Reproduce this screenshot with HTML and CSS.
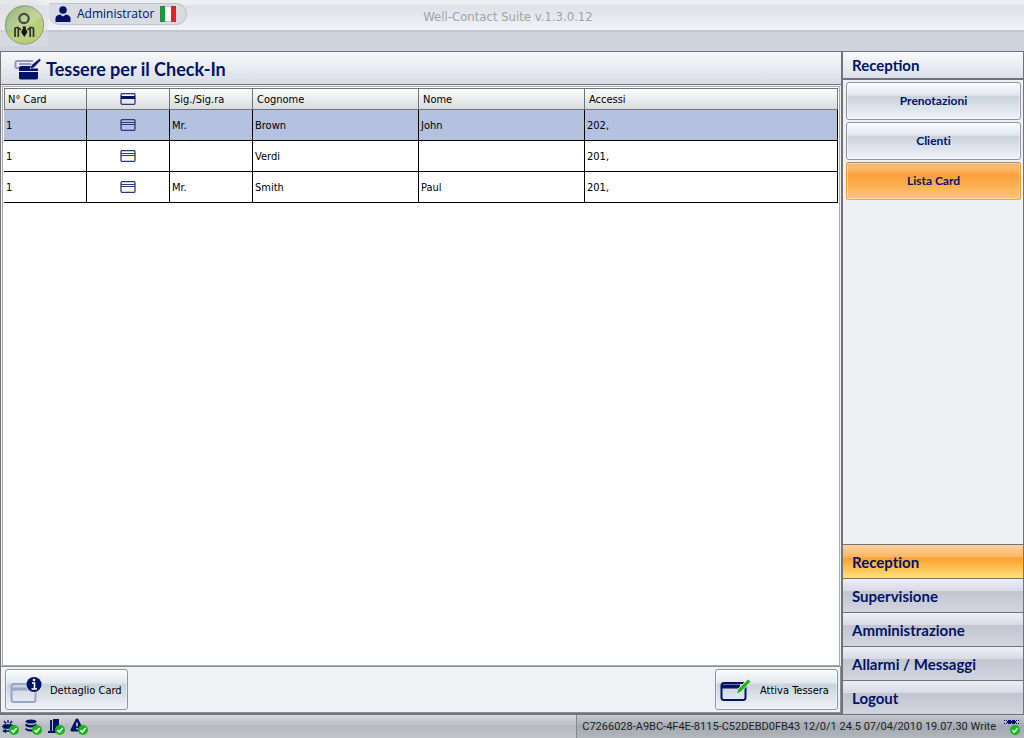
FILE: index.html
```html
<!DOCTYPE html>
<html lang="it">
<head>
<meta charset="utf-8">
<title>Well-Contact Suite</title>
<link rel="stylesheet" href="styles.css">
</head>
<body>
<svg class="defs" aria-hidden="true">
  <symbol id="card" viewBox="0 0 16 12">
    <rect x="1" y="0.5" width="14" height="11" rx="1.5" fill="none" stroke="#2b3a80" stroke-width="1.3"/>
    <path d="M1 3.5h14M1 5.5h14" stroke="#2b3a80"/>
  </symbol>
  <symbol id="check" viewBox="0 0 10 10">
    <circle cx="5" cy="5" r="5" fill="#12b818"/>
    <path d="M2.4 5.2l1.9 1.9 3.4-4" fill="none" stroke="#fff" stroke-width="1.6"/>
  </symbol>
</svg>
<div class="app">
  <header class="topbar">
    <svg class="logo" viewBox="0 0 48 46" role="img" aria-label="Well-Contact">
      <defs><linearGradient id="lg" x1="0" y1="0" x2="1" y2="1"><stop offset="0" stop-color="#7fa670"/><stop offset=".5" stop-color="#b8ce82"/><stop offset="1" stop-color="#bccf6c"/></linearGradient></defs>
      <path d="M0 0H36Q46 5 49 20V46H0Z" fill="#dfe0e1" opacity=".5"/>
      <circle cx="24.5" cy="25" r="19.2" fill="url(#lg)" stroke="#8d9c7c"/>
      <path d="M6 29Q27 30 42 17Q36 6 24 6.5Q6 9 6 29Z" fill="#fff" opacity=".14"/>
      <circle cx="24" cy="18.5" r="4.7" fill="none" stroke="#45494a" stroke-width="2.2"/>
      <path d="M15 37V29Q15 27.5 16.5 27.5H18.3V37M33.5 37V29Q33.5 27.5 32 27.5H30.2V37M18.300 27.5L21 30M30.200 27.5L27.500 30" fill="none" stroke="#2c3031" stroke-width="1.7"/>
      <path d="M22.5 26.5h3.5l-.5 2 2 3.5-3.2 5-3.2-5 2-3.5z" fill="#101415"/>
    </svg>
    <div class="user">
      <svg width="16" height="16" viewBox="0 0 16 16" aria-hidden="true"><circle cx="8" cy="4" r="3.8" fill="#001366"/><path d="M0.5 16V12Q1 9 5 8.5L8 10.5 11 8.5Q15 9 15.5 12V16Z" fill="#001366"/></svg>
      <span class="user-name">Administrator</span>
      <svg width="16" height="16" viewBox="0 0 16 16" role="img" aria-label="Italiano"><rect width="16" height="16" fill="#fff"/><rect width="5" height="16" fill="#1d9a3a"/><rect x="11" width="5" height="16" fill="#ee1c24"/><rect x=".5" y=".5" width="15" height="15" fill="none" stroke="#555" opacity=".35"/></svg>
    </div>
    <div class="app-title">Well-Contact Suite v.1.3.0.12</div>
  </header>

  <main class="panel">
    <h1 class="panel-title">
      <svg width="28" height="22" viewBox="0 0 28 22" aria-hidden="true">
        <path d="M1.5 10V5Q1.5 3 3.5 3H19" fill="none" stroke="#8e99c3" stroke-width="2"/><path d="M5 6H17M1.5 10H5" stroke="#8e99c3" stroke-width="2"/>
        <path d="M7 8H18L19 10.5H24V13H5V10Q5 8 7 8ZM5 14H24V20Q24 21.5 22 21.5H7Q5 21.5 5 20Z" fill="#001366"/>
        <path d="M16 11L17.5 7 25.5 0.5 27 2.2 20 9.5Z" fill="#001366" stroke="#e8eaf0" stroke-width=".5"/>
      </svg>
      Tessere per il Check-In
    </h1>
    <div class="grid-wrap">
      <table class="grid">
        <colgroup><col class="c-sm"><col class="c-sm"><col class="c-sm"><col class="c-lg"><col class="c-lg"><col></colgroup>
        <thead><tr>
          <th scope="col">N° Card</th>
          <th scope="col" class="mid"><svg width="16" height="12" viewBox="0 0 16 12" role="img" aria-label="Card"><rect x="1" y=".5" width="14" height="11" rx="1.5" fill="none" stroke="#2b3a80" stroke-width="1.3"/><rect x="1" y="3" width="14" height="3" fill="#001366"/></svg></th>
          <th scope="col">Sig./Sig.ra</th><th scope="col">Cognome</th><th scope="col">Nome</th><th scope="col">Accessi</th>
        </tr></thead>
        <tbody>
          <tr class="selected"><td>1</td><td class="mid"><svg width="16" height="12"><use href="#card"/></svg></td><td>Mr.</td><td>Brown</td><td>John</td><td>202,</td></tr>
          <tr><td>1</td><td class="mid"><svg width="16" height="12"><use href="#card"/></svg></td><td></td><td>Verdi</td><td></td><td>201,</td></tr>
          <tr><td>1</td><td class="mid"><svg width="16" height="12"><use href="#card"/></svg></td><td>Mr.</td><td>Smith</td><td>Paul</td><td>201,</td></tr>
        </tbody>
      </table>
    </div>
    <div class="actions">
      <button class="btn action" type="button">
        <svg width="32" height="28" viewBox="0 0 32 28" aria-hidden="true"><rect x="1.5" y="8" width="24" height="18" rx="2.5" fill="none" stroke="#9aa4c8" stroke-width="2"/><path d="M2 13H25" stroke="#9aa4c8" stroke-width="3"/><circle cx="24" cy="8.5" r="8.3" fill="#e4e9ef"/><circle cx="24" cy="8.5" r="7.6" fill="#001366"/><path d="M22 7H24.5V13M21.5 13H27" stroke="#fff" stroke-width="1.6" fill="none"/><circle cx="24" cy="4" r="1.3" fill="#fff"/></svg>
        <span>Dettaglio Card</span>
      </button>
      <button class="btn action" type="button">
        <svg width="32" height="28" viewBox="0 0 32 28" aria-hidden="true"><rect x="1.5" y="7" width="24" height="17" rx="2.5" fill="none" stroke="#001366" stroke-width="2"/><path d="M2 10.5H20" stroke="#001366" stroke-width="4"/><path d="M16 18.5L18 13 28 3 31 5.5 21 16Z" fill="#1fb81c" stroke="#e4e9ef"/></svg>
        <span>Attiva Tessera</span>
      </button>
    </div>
  </main>

  <aside class="side">
    <h2 class="side-title">Reception</h2>
    <div class="side-body">
      <button class="btn side-btn" type="button">Prenotazioni</button>
      <button class="btn side-btn" type="button">Clienti</button>
      <button class="btn side-btn current" type="button">Lista Card</button>
    </div>
    <nav class="nav">
      <button class="nav-item current" type="button">Reception</button>
      <button class="nav-item" type="button">Supervisione</button>
      <button class="nav-item" type="button">Amministrazione</button>
      <button class="nav-item" type="button">Allarmi / Messaggi</button>
      <button class="nav-item" type="button">Logout</button>
    </nav>
  </aside>

  <footer class="status">
    <div class="status-icons">
      <svg width="18" height="18" viewBox="0 0 18 18"><path d="M3 7h8v3H3zM1 8.5h3M7 2v3M3 3l2 2.5M11 3L9 5.5M2 13h8M5 11.5L2.5 13 5 14.5" stroke="#001366" stroke-width="1.3" fill="#001366"/><use href="#check" x="8" y="7" width="10" height="10"/></svg>
      <svg width="18" height="18" viewBox="0 0 18 18"><ellipse cx="7" cy="3.5" rx="5.5" ry="2" fill="#001366"/><path d="M1.500 5.500Q7 8.500 12.500 5.500V8Q7 11 1.500 8ZM1.500 10Q7 13 12.500 10V12Q7 15 1.500 12Z" fill="#001366"/><use href="#check" x="8" y="7" width="10" height="10"/></svg>
      <svg width="18" height="18" viewBox="0 0 18 18"><path d="M3 2h2v11H3zM6 1h6v12H6zM1 13h12v2H1z" fill="#001366"/><use href="#check" x="8" y="7" width="10" height="10"/></svg>
      <svg width="18" height="18" viewBox="0 0 18 18"><path d="M7 2L12 12H2Z" fill="#001366" stroke="#001366" stroke-linejoin="round" stroke-width="3"/><path d="M7 4.500v4M7 10v1.500" stroke="#d8d9dd" stroke-width="1.5"/><use href="#check" x="8" y="7" width="10" height="10"/></svg>
    </div>
    <div class="status-text">
      <span>C7266028-A9BC-4F4E-8115-C52DEBD0FB43 12/0/1 24.5 07/04/2010 19.07.30 Write</span>
      <svg width="18" height="18" viewBox="0 0 18 18"><path d="M1 2.5h15M1 5.5h15" stroke="#001366" stroke-width="1" stroke-dasharray="1 1"/><path d="M4 3h9v2H4zM5 2h3v4H5zM9 2h3v4H9z" fill="#001366"/><use href="#check" x="7" y="7" width="10" height="10"/></svg>
    </div>
  </footer>
</div>
</body>
</html>
```
FILE: styles.css
```css
* { box-sizing: border-box; }
body {
  margin: 0;
  font-family: "DejaVu Sans Condensed", "Noto Sans", sans-serif;
  font-size: 11px;
  font-variant-ligatures: none;
  color: #000;
}
svg { display: block; flex: none; }
.defs { position: absolute; width: 0; height: 0; }
button { font: inherit; font-variant-ligatures: none; color: inherit; margin: 0; cursor: pointer; }

.app {
  display: grid;
  grid-template: 51px 1fr 24px / 1fr 183px;
  height: 100vh;
  background: #cfd3dc;
}

.topbar {
  grid-column: 1 / -1;
  display: grid;
  grid-template-columns: 1fr auto 1fr;
  align-items: start;
  background: linear-gradient(#ebedef 0, #eeeff1 4px, #dee1e6 6px, #f0f4f9 30px, #c2c6d0 30px, #c2c6d0 32px, #cfd3dc 32px);
}
.logo { grid-area: 1 / 1; width: 48px; height: 46px; }
.user {
  grid-area: 1 / 1;
  display: flex;
  align-items: center;
  gap: 6px;
  justify-self: start;
  margin: 3px 0 0 49px;
  padding: 0 10px 0 6px;
  height: 22px;
  border: 1px solid #c0c4cb;
  border-left: 0;
  border-radius: 0 11px 11px 10px;
  background: #d8dbe1;
  color: #001366;
  font: 12px/20px "Open Sans", sans-serif;
}
.app-title {
  grid-area: 1 / 2;
  padding-top: 8px;
  margin-right: 8px;
  font: 13px/18px "DejaVu Sans Condensed", sans-serif;
  color: #a1a3a5;
}

.panel {
  display: flex;
  flex-direction: column;
  min-width: 0;
  border: 1px solid #707377;
  border-right: 0;
  background: #eff1f4;
}
.panel-title {
  display: flex;
  align-items: center;
  gap: 4px;
  margin: 0;
  height: 33px;
  padding: 1px 13px 0;
  border-bottom: 1px solid #707377;
  background: linear-gradient(#f7f8f9, #d8dde6);
  color: #001366;
  font: 700 18px/24px Lato, sans-serif;
}
.grid-wrap {
  flex: 1;
  margin: 1px 1px 0;
  padding: 1px;
  border: 1px solid #a9abae;
  background: #fff;
}
.grid { width: 100%; table-layout: fixed; border-spacing: 0; }
.c-sm { width: 83px; }
.c-lg { width: 166px; }
.grid th {
  height: 22px;
  padding: 0 4px;
  border: solid #707377;
  border-width: 1px 1px 1px 0;
  background: linear-gradient(#fdfdfd, #d9dbde);
  font-weight: 400;
  text-align: left;
}
.grid th:first-child { border-left-width: 1px; padding-left: 3px; }
.grid td {
  height: 31px;
  padding: 0 2px;
  border: solid #000;
  border-width: 0 1px 1px 0;
}
.grid .selected td { background: #b4c1df; }
.grid .mid svg { margin: 0 auto; }
.actions {
  display: flex;
  justify-content: space-between;
  padding: 2px 2px 2px 4px;
  height: 47px;
  border: 1px solid #8b8e92;
  border-left: 0;
}

.btn {
  border: 1px solid #8f959f;
  border-radius: 3px;
  background: linear-gradient(#fbfcfd 0, #e3e9ef 32%, #c9d3dd 38%, #f0f3f7 100%);
  box-shadow: inset 0 0 0 1px #ffffff66;
}
.action {
  display: flex;
  align-items: center;
  gap: 8px;
  width: 123px;
  height: 41px;
  padding: 1px 4px 0;
}

.side {
  display: flex;
  flex-direction: column;
  border: solid #707377;
  border-width: 1px 1px 0 2px;
  background: #eff0f3;
  color: #001366;
  font: 700 15px/20px Lato, sans-serif;
}
.side-title {
  margin: 0;
  height: 28px;
  padding: 3px 9px;
  border-bottom: 2px solid #707377;
  background: linear-gradient(#f9fafb, #dbe0e9);
  font: inherit;
}
.side-body {
  flex: 1;
  display: flex;
  flex-direction: column;
  gap: 2px;
  padding: 2px 2px 2px 3px;
}
.side-btn { height: 38px; font-size: 12px; line-height: 16px; }
.side-btn.current {
  border-color: #a8905f #e0a038 #f0a830;
  background: linear-gradient(#e9b878 0, #fdbb6e 12%, #fb9f3c 34%, #fdc673 100%);
}
.nav { display: flex; flex-direction: column; }
.nav-item {
  height: 34px;
  padding: 0 9px;
  border: 0;
  border-top: 1px solid #707377;
  background: linear-gradient(#eceefa 0, #d8dbe6 36%, #c3c6d1 38%, #d2d5e1 100%);
  text-align: left;
}
.nav-item.current { background: linear-gradient(#fdd3a2 0, #fdb560 36%, #fca030 40%, #ffe07a 100%); }

.status {
  grid-column: 1 / -1;
  display: flex;
  justify-content: space-between;
  border-top: 1px solid #707377;
  background: linear-gradient(#d8d9dd, #b8bac0 50%, #c2c4ca);
}
.status-icons { display: flex; gap: 5px; padding: 3px 1px; }
.status-text {
  display: flex;
  align-items: center;
  gap: 7px;
  padding: 0 3px 0 5px;
  border-left: 1px solid #85888e;
  background: linear-gradient(#c6c9cf, #a5aab1 50%, #b1b5bc);
  color: #202326;
  font-family: Roboto, sans-serif;
  white-space: nowrap;
}
```
